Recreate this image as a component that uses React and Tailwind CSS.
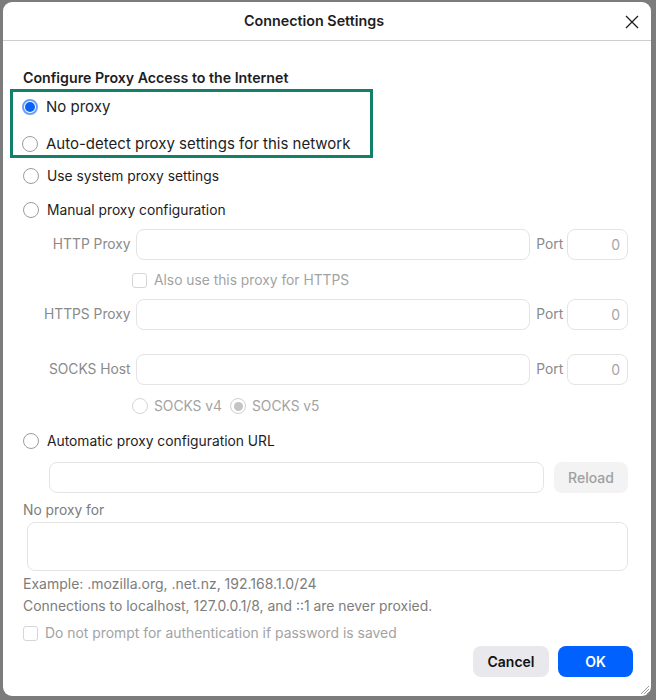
import React, { useState } from "react";

const font = { fontFamily: "Inter, 'Liberation Sans', sans-serif" };

const Radio = ({ checked, disabled }) => {
    if (checked && disabled) {
        return (
            <span className="w-[16px] h-[16px] rounded-full border border-[#cfcfcf] bg-white flex items-center justify-center shrink-0">
                <span className="w-[9px] h-[9px] rounded-full bg-[#c4c4c4]" />
            </span>
        );
    }
    if (checked) {
        return (
            <span className="w-[16px] h-[16px] rounded-full border-2 border-[#6a9ef7] bg-white flex items-center justify-center shrink-0">
                <span className="w-[10px] h-[10px] rounded-full bg-[#0a62f5]" />
            </span>
        );
    }
    return (
        <span
            className={`w-[16px] h-[16px] rounded-full border bg-white shrink-0 ${
                disabled ? "border-[#d6d6d6]" : "border-[#9c9c9c]"
            }`}
        />
    );
};

const Checkbox = ({ disabled }) => (
    <span
        className={`w-[15px] h-[15px] rounded-[3px] border bg-white shrink-0 ${
            disabled ? "border-[#d6d6d6]" : "border-[#9c9c9c]"
        }`}
    />
);

// the two options inside the highlight box are drawn a touch larger
const RadioRow = ({ label, checked, onClick, big, className = "" }) => (
    <div className={`h-[22px] flex items-center gap-[8px] cursor-default ${className}`} onClick={onClick}>
        <Radio checked={checked} />
        <span className={`${big ? "text-[15px]" : "text-[13.8px]"} text-[#1d1d1f]`}>{label}</span>
    </div>
);

const Field = ({ className = "" }) => (
    <div className={`h-[31px] rounded-[8px] border border-[#e4e4e4] bg-white ${className}`} />
);

const ProxyRow = ({ label, className = "" }) => (
    <div className={`flex items-center ${className}`}>
        <span className="w-[113px] pr-[5px] text-right text-[13.8px] text-[#8a8a8a]">{label}</span>
        <Field className="w-[396px]" />
        <span className="ml-[6px] w-[31px] text-[13.8px] text-[#8a8a8a]">Port</span>
        <div className="h-[31px] w-[61px] rounded-[8px] border border-[#e4e4e4] bg-white flex items-center justify-end pr-[7px] text-[14px] text-[#a6a6a6]">
            0
        </div>
    </div>
);

export default function App() {
    const [mode, setMode] = useState("none");

    return (
        <div className="w-[656px] h-[700px] bg-[#7c7c7c] pl-[3px] pr-[5px] pt-[2px] pb-[4px]" style={font}>
            <div className="relative h-full bg-white rounded-[9px] flex flex-col">
                <header className="h-[39px] shrink-0 border-b border-[#cdcdcd] flex items-center justify-center pr-[26px] relative">
                    <h1 className="text-[14.3px] font-semibold text-[#1d1d1f]">Connection Settings</h1>
                    <button className="absolute right-[12px] top-[13px] w-[14px] h-[14px]">
                        <svg viewBox="0 0 14 14" width="14" height="14">
                            <path d="M1 1L13 13M13 1L1 13" stroke="#1d1d1f" strokeWidth="1.3" fill="none" />
                        </svg>
                    </button>
                </header>

                <main className="pl-[20px] pr-[23px] flex flex-col">
                    <h2 className="mt-[27px] h-[20px] leading-[20px] text-[14.2px] font-semibold text-[#1d1d1f]">
                        Configure Proxy Access to the Internet
                    </h2>

                    <div className="mt-[1px] -ml-[13px] w-[363px] h-[69px] border-[3px] border-[#13806a] pl-[9px] pt-[4px] flex flex-col gap-[15px]">
                        <RadioRow big label="No proxy" checked={mode === "none"} onClick={() => setMode("none")} />
                        <RadioRow
                            big
                            label="Auto-detect proxy settings for this network"
                            checked={mode === "auto"}
                            onClick={() => setMode("auto")}
                        />
                    </div>

                    <RadioRow
                        className="mt-[7px]"
                        label="Use system proxy settings"
                        checked={mode === "system"}
                        onClick={() => setMode("system")}
                    />
                    <RadioRow
                        className="mt-[12px]"
                        label="Manual proxy configuration"
                        checked={mode === "manual"}
                        onClick={() => setMode("manual")}
                    />

                    <ProxyRow className="mt-[8px]" label="HTTP Proxy" />

                    <div className="mt-[10px] h-[20px] pl-[109px] flex items-center gap-[7px]">
                        <Checkbox disabled />
                        <span className="text-[13.8px] text-[#a3a3a3]">Also use this proxy for HTTPS</span>
                    </div>

                    <ProxyRow className="mt-[9px]" label="HTTPS Proxy" />
                    <ProxyRow className="mt-[24px]" label="SOCKS Host" />

                    <div className="mt-[11px] h-[20px] pl-[109px] flex items-center">
                        <Radio disabled />
                        <span className="ml-[6px] text-[13.8px] text-[#a3a3a3]">SOCKS v4</span>
                        <span className="ml-[8px]">
                            <Radio checked disabled />
                        </span>
                        <span className="ml-[6px] text-[13.8px] text-[#a3a3a3]">SOCKS v5</span>
                    </div>

                    <RadioRow
                        className="mt-[14px]"
                        label="Automatic proxy configuration URL"
                        checked={mode === "pac"}
                        onClick={() => setMode("pac")}
                    />

                    <div className="mt-[10px] flex items-center gap-[10px] pl-[26px]">
                        <Field className="w-[495px]" />
                        <button className="h-[31px] flex-1 rounded-[8px] bg-[#f3f3f3] text-[14px] font-medium text-[#a0a0a0]">
                            Reload
                        </button>
                    </div>

                    <div className="mt-[7px] h-[20px] leading-[20px] text-[13.8px] text-[#7d7d7d]">No proxy for</div>
                    <Field className="mt-[2px] ml-[4px] h-[49px]" />

                    <div className="mt-[3px] h-[20px] leading-[20px] text-[14px] text-[#7d7d7d]">
                        Example: .mozilla.org, .net.nz, 192.168.1.0/24
                    </div>
                    <div className="mt-[2px] h-[20px] leading-[20px] text-[13.9px] text-[#7d7d7d]">
                        Connections to localhost, 127.0.0.1/8, and ::1 are never proxied.
                    </div>

                    <div className="mt-[7px] h-[20px] flex items-center gap-[7px]">
                        <Checkbox disabled />
                        <span className="text-[13.9px] text-[#a3a3a3]">Do not prompt for authentication if password is saved</span>
                    </div>

                    <div className="mt-[3px] -mr-[5px] flex justify-end gap-[9px]">
                        <button className="h-[31px] w-[76px] rounded-[8px] bg-[#e9e9ed] text-[14px] font-semibold text-[#111]">
                            Cancel
                        </button>
                        <button className="h-[31px] w-[75px] rounded-[8px] bg-[#0061fe] text-[14px] font-semibold text-white">
                            OK
                        </button>
                    </div>
                </main>

                <svg className="absolute right-[1px] bottom-[1px]" width="11" height="11" viewBox="0 0 11 11">
                    <path d="M10 2L2 10M10 5L5 10M10 8L8 10" stroke="#9a9a9a" strokeWidth="1" />
                </svg>
            </div>
        </div>
    );
}
